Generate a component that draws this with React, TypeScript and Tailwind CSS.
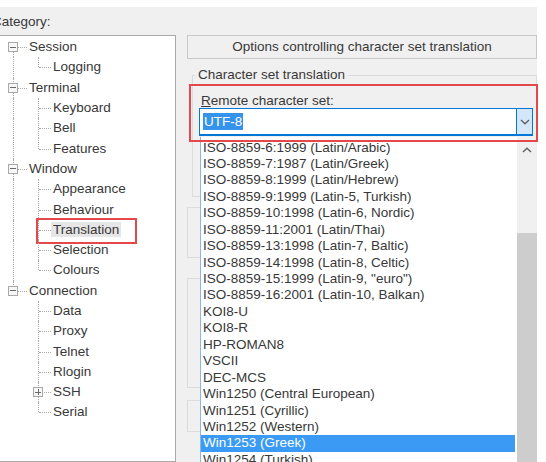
import React from 'react'

type Node = {
  label: string
  level: 0 | 1
  exp?: '-' | '+'
  last?: boolean
  selected?: boolean
}

const TREE: Node[] = [
  { label: 'Session', level: 0, exp: '-' },
  { label: 'Logging', level: 1, last: true },
  { label: 'Terminal', level: 0, exp: '-' },
  { label: 'Keyboard', level: 1 },
  { label: 'Bell', level: 1 },
  { label: 'Features', level: 1, last: true },
  { label: 'Window', level: 0, exp: '-' },
  { label: 'Appearance', level: 1 },
  { label: 'Behaviour', level: 1 },
  { label: 'Translation', level: 1, selected: true },
  { label: 'Selection', level: 1 },
  { label: 'Colours', level: 1, last: true },
  { label: 'Connection', level: 0, exp: '-' },
  { label: 'Data', level: 1 },
  { label: 'Proxy', level: 1 },
  { label: 'Telnet', level: 1 },
  { label: 'Rlogin', level: 1 },
  { label: 'SSH', level: 1, exp: '+' },
  { label: 'Serial', level: 1, last: true },
]

const CHARSETS = [
  'ISO-8859-6:1999 (Latin/Arabic)',
  'ISO-8859-7:1987 (Latin/Greek)',
  'ISO-8859-8:1999 (Latin/Hebrew)',
  'ISO-8859-9:1999 (Latin-5, Turkish)',
  'ISO-8859-10:1998 (Latin-6, Nordic)',
  'ISO-8859-11:2001 (Latin/Thai)',
  'ISO-8859-13:1998 (Latin-7, Baltic)',
  'ISO-8859-14:1998 (Latin-8, Celtic)',
  'ISO-8859-15:1999 (Latin-9, "euro")',
  'ISO-8859-16:2001 (Latin-10, Balkan)',
  'KOI8-U',
  'KOI8-R',
  'HP-ROMAN8',
  'VSCII',
  'DEC-MCS',
  'Win1250 (Central European)',
  'Win1251 (Cyrillic)',
  'Win1252 (Western)',
  'Win1253 (Greek)',
  'Win1254 (Turkish)',
]

function Expander({ sign, left }: { sign: '-' | '+'; left: string }) {
  return (
    <span
      className={`absolute top-1/2 -translate-y-1/2 ${left} w-[10px] h-[10px] border border-[#a8a8a8] bg-[#f7f7f7] flex items-center justify-center`}
    >
      <span className="absolute w-[6px] h-px bg-[#6a6a6a]" />
      {sign === '+' && <span className="absolute w-px h-[6px] bg-[#6a6a6a]" />}
    </span>
  )
}

function TreeRow({ node, index }: { node: Node; index: number }) {
  const connIndex = 12
  const first = index === 0
  const rootLine = index <= connIndex
  return (
    <div className="relative h-[20.3px] flex items-center">
      {/* root level vertical line */}
      {rootLine && (
        <span
          className={`absolute left-[17px] border-l border-dotted border-[#a8a8a8] ${
            first ? 'top-1/2 bottom-0' : index === connIndex ? 'top-0 h-1/2' : 'top-0 bottom-0'
          }`}
        />
      )}
      {node.level === 0 ? (
        <>
          <span className="absolute left-[22px] w-[9px] top-1/2 border-t border-dotted border-[#a8a8a8]" />
          <Expander sign={node.exp ?? '-'} left="left-[12px]" />
          <span className="pl-[33px]">{node.label}</span>
        </>
      ) : (
        <>
          <span
            className={`absolute left-[42px] border-l border-dotted border-[#a8a8a8] ${
              node.last ? 'top-0 h-1/2' : 'top-0 bottom-0'
            }`}
          />
          <span className="absolute left-[43px] w-[12px] top-1/2 border-t border-dotted border-[#a8a8a8]" />
          {node.exp && <Expander sign={node.exp} left="left-[37px]" />}
          <span className="pl-[57px]">
            <span className={node.selected ? 'bg-[#e6e6e6] -ml-[2px] px-[2px]' : ''}>{node.label}</span>
          </span>
          {node.selected && (
            <span className="absolute left-[40px] top-[-2px] w-[101px] h-[26px] border-2 border-[#e5484b]" />
          )}
        </>
      )}
    </div>
  )
}

function Chevron({ up }: { up?: boolean }) {
  return (
    <svg width="10" height="6" viewBox="0 0 10 6" className="block">
      <path
        d={up ? 'M1 5 L5 1.2 L9 5' : 'M1 1 L5 4.8 L9 1'}
        fill="none"
        stroke="#606060"
        strokeWidth="1.4"
      />
    </svg>
  )
}

export default function App() {
  return (
    <div className="relative w-[546px] h-[462px] overflow-hidden bg-white flex flex-col font-['Liberation_Sans',Arial,sans-serif] text-[13.5px] leading-[16px] text-[#383838]">
      <div className="h-[7px] bg-white shrink-0" />
      <div className="flex-1 w-[537px] bg-[#f0f0f0] flex">
        {/* left: category tree */}
        <div className="ml-[-5px] w-[181px] flex flex-col">
          <div className="h-[28px] pt-[7px] -ml-[3px]">Category:</div>
          <div className="flex-1 bg-white border border-[#a9a9a9] pt-px">
            {TREE.map((n, i) => (
              <TreeRow key={n.label} node={n} index={i} />
            ))}
          </div>
        </div>

        {/* right: translation panel */}
        <div className="ml-[11px] w-[350px] pt-[28px] flex flex-col">
          <div className="h-[24px] border border-[#c8c8c8] bg-[#f0f0f0] flex items-center justify-center">
            Options controlling character set translation
          </div>

          <div className="relative mt-[16px] ml-[5px] h-[122px] border border-[#dcdcdc]">
            <span className="absolute -top-[9px] left-[2px] px-[3px] bg-[#f0f0f0]">
              Character set translation
            </span>
            <div className="pt-[17px] pl-[8px] leading-[15px]">
              <span className="underline">R</span>emote character set:
            </div>
            <div className="ml-[6px] w-[334px] h-[28px] bg-white border border-[#0078d7] border-b-2 flex">
              <div className="flex-1 flex items-center pl-[3px]">
                <span className="bg-[#3593ec] text-white px-px leading-[17px]">UTF-8</span>
              </div>
              <div className="w-[16px] bg-[#d4e7f8] border-l border-[#0078d7] flex items-center justify-center">
                <Chevron />
              </div>
            </div>
            <span className="absolute left-[-4px] top-[8px] w-[349px] h-[58px] border-2 border-[#e5484b] z-20" />
          </div>

          <div className="mt-[10px] h-[51px] border border-[#dcdcdc]" />
          <div className="mt-[20px] h-[110px] border border-[#dcdcdc]" />
          <div className="mt-[12px] h-[32px] border border-[#dcdcdc]" />
        </div>
      </div>

      {/* open dropdown list */}
      <div className="absolute left-[200px] top-[137px] w-[337px] h-[340px] bg-white border-l border-[#8ab8e6] flex z-10">
        <div className="flex-1 mr-[2px] pt-[2.5px]">
          {CHARSETS.map((c) => (
            <div
              key={c}
              className={`h-[16.45px] leading-[16.45px] pl-[2px] whitespace-nowrap ${
                c === 'Win1253 (Greek)' ? 'bg-[#3b9bf4] text-white' : ''
              }`}
            >
              {c}
            </div>
          ))}
        </div>
        <div className="w-[20px] bg-[#f0f0f0] flex flex-col">
          <div className="h-[96px] flex justify-center pt-[10px]">
            <Chevron up />
          </div>
          <div className="flex-1 bg-[#cdcdcd]" />
        </div>
      </div>
    </div>
  )
}
